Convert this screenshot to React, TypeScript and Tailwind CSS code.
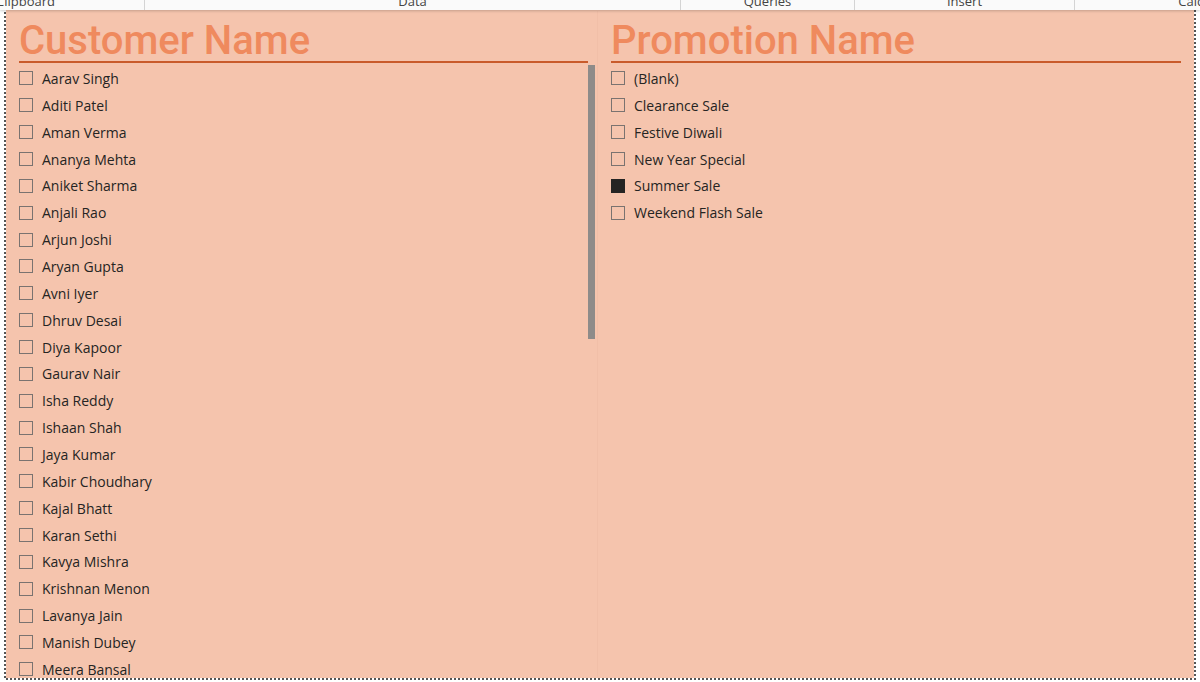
import { Fragment } from 'react'

const customers = [
  'Aarav Singh', 'Aditi Patel', 'Aman Verma', 'Ananya Mehta', 'Aniket Sharma',
  'Anjali Rao', 'Arjun Joshi', 'Aryan Gupta', 'Avni Iyer', 'Dhruv Desai',
  'Diya Kapoor', 'Gaurav Nair', 'Isha Reddy', 'Ishaan Shah', 'Jaya Kumar',
  'Kabir Choudhary', 'Kajal Bhatt', 'Karan Sethi', 'Kavya Mishra', 'Krishnan Menon',
  'Lavanya Jain', 'Manish Dubey', 'Meera Bansal', 'Mohit Agarwal', 'Neha Kulkarni',
]

const promotions = [
  { name: '(Blank)', checked: false },
  { name: 'Clearance Sale', checked: false },
  { name: 'Festive Diwali', checked: false },
  { name: 'New Year Special', checked: false },
  { name: 'Summer Sale', checked: true },
  { name: 'Weekend Flash Sale', checked: false },
]

const ribbonGroups = [
  { label: 'Clipboard', w: 'w-[238px]', ml: '-ml-[93px]' },
  { label: 'Data', w: 'w-[536px]', ml: '' },
  { label: 'Queries', w: 'w-[174px]', ml: '' },
  { label: 'Insert', w: 'w-[220px]', ml: '' },
  { label: 'Calculations', w: 'w-[280px]', ml: '' },
]

function Item({ label, checked }: { label: string; checked?: boolean }) {
  return (
    <div className="flex items-center h-[26.87px] shrink-0">
      <span
        className={
          checked
            ? 'w-[14px] h-[14px] bg-[#252423] border border-[#252423] shrink-0'
            : 'w-[14px] h-[14px] border border-[#7a7370] shrink-0'
        }
      />
      <span className="ml-[9px] text-[14px] text-[#252423] whitespace-nowrap font-['Open_Sans',sans-serif]">
        {label}
      </span>
    </div>
  )
}

function Slicer({ title, children, scroll }: { title: string; children: React.ReactNode; scroll?: boolean }) {
  return (
    <div className="flex flex-col min-w-0 overflow-hidden h-full">
      <div className={`h-[52px] flex items-end border-b-2 border-[#c95b2b] ${scroll ? 'mr-[7px]' : ''}`}>
        <span className="text-[40px] leading-none text-[#ef8a5e] font-['Roboto',sans-serif] font-medium">
          {title}
        </span>
      </div>
      <div className="flex flex-1 min-h-0 pt-[2px]">
        <div className="flex-1 flex flex-col min-w-0">{children}</div>
        {scroll && (
          <div className="w-[7px]">
            <div className="h-[274px] bg-[#8e8b89]" />
          </div>
        )}
      </div>
    </div>
  )
}

export default function App() {
  return (
    <div className="w-[1200px] h-[682px] bg-white overflow-hidden flex flex-col relative">
      {/* ribbon group labels, cut off at top */}
      <div className="h-[10px] bg-[#fafafa] flex overflow-hidden shrink-0 relative z-10 shadow-[0_1px_3px_rgba(0,0,0,0.2)]">
        {ribbonGroups.map((g, i) => (
          <Fragment key={g.label}>
            <div className={`${g.w} ${g.ml} shrink-0 flex justify-center relative ${i < ribbonGroups.length - 1 ? 'border-r border-[#d4d4d4]' : ''}`}>
              <span className="text-[13px] leading-none text-[#444] font-['Open_Sans',sans-serif] -mt-[5px]">{g.label}</span>
            </div>
          </Fragment>
        ))}
      </div>

      {/* report canvas with dotted selection border */}
      <div className="flex-1 px-[4px] pb-[2px] min-h-0">
        <div className="h-full px-[2px] pb-[2px] bg-[image:repeating-conic-gradient(#555_0_25%,transparent_0_50%)] bg-[length:4px_4px]">
          <div className="h-full bg-[#f5c4ad] flex pt-[1px] min-h-0">
            <div className="w-[591px] shrink-0 pl-[13px] pr-[2px] h-full">
              <Slicer title="Customer Name" scroll>
                {customers.map((c) => (
                  <Item key={c} label={c} />
                ))}
              </Slicer>
            </div>
            <div className="w-px bg-[#f1bfa8]" />
            <div className="flex-1 pl-[13px] pr-[13px] h-full min-w-0">
              <Slicer title="Promotion Name">
                {promotions.map((p) => (
                  <Item key={p.name} label={p.name} checked={p.checked} />
                ))}
              </Slicer>
            </div>
          </div>
        </div>
      </div>
    </div>
  )
}
